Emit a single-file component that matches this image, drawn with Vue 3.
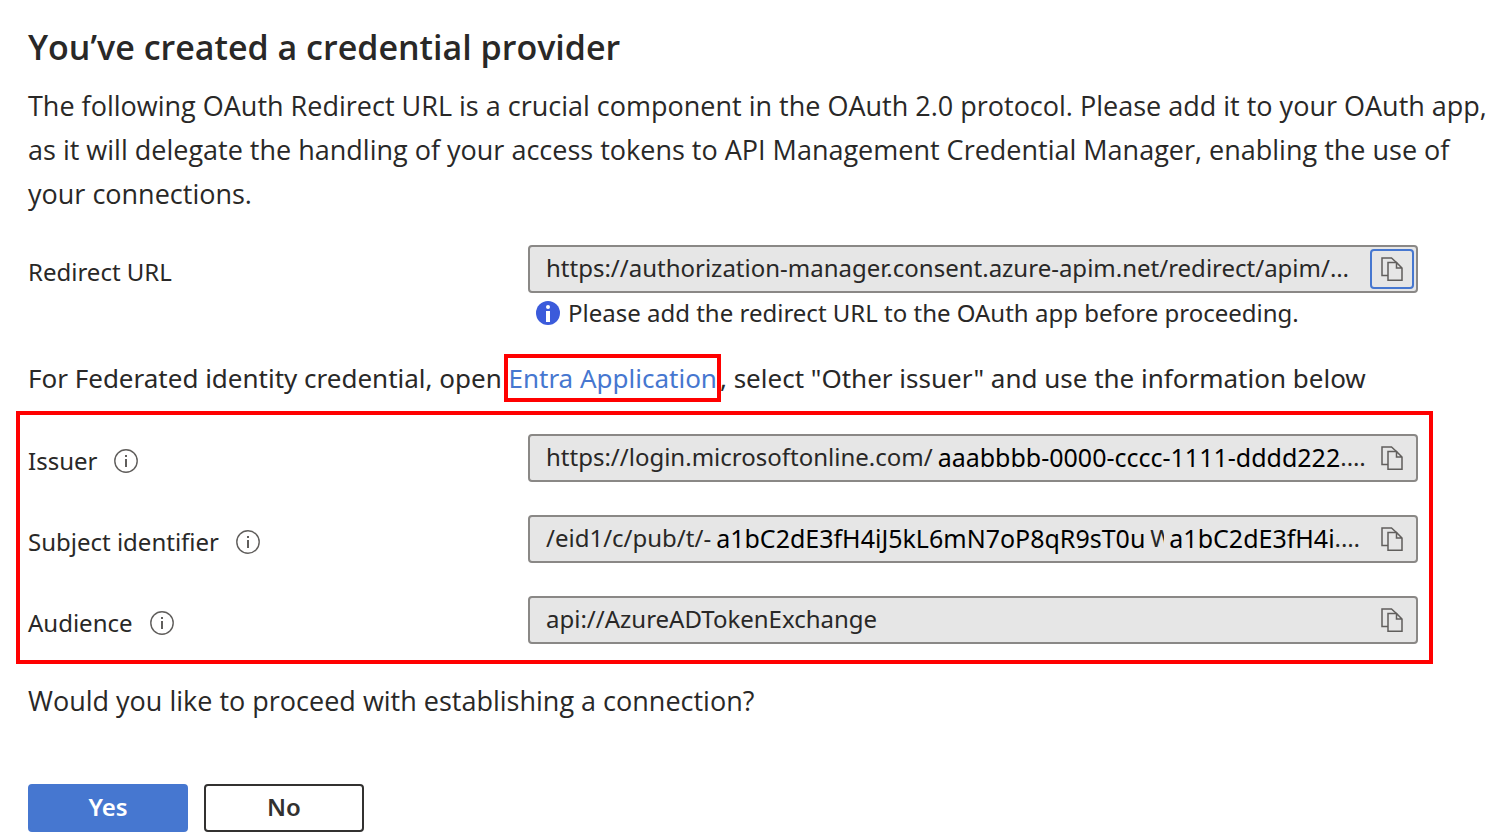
<script setup>
const redirectUrl = 'https://authorization-manager.consent.azure-apim.net/redirect/apim/…'

const fields = [
  {
    id: 'issuer',
    label: 'Issuer',
    parts: [
      { text: 'https://login.microsoftonline.com/', kind: 'plain' },
      { text: 'aaabbbb-0000-cccc-1111-dddd222', kind: 'mask' },
      { text: '.…', kind: 'plain' },
    ],
  },
  {
    id: 'subject',
    label: 'Subject identifier',
    parts: [
      { text: '/eid1/c/pub/t/-', kind: 'plain' },
      { text: 'a1bC2dE3fH4iJ5kL6mN7oP8qR9sT0u', kind: 'mask' },
      { text: 'W', kind: 'sliver' },
      { text: 'a1bC2dE3fH4i', kind: 'mask' },
      { text: '.…', kind: 'plain' },
    ],
  },
  { id: 'audience', label: 'Audience', value: 'api://AzureADTokenExchange' },
]
</script>

<template>
  <main class="page">
    <h1>You’ve created a credential provider</h1>
    <p class="prose intro">
      The following OAuth Redirect URL is a crucial component in the OAuth 2.0 protocol. Please add it to your OAuth app,
      as it will delegate the handling of your access tokens to API Management Credential Manager, enabling the use of
      your connections.
    </p>

    <div class="row redirect">
      <label class="name" for="redirect">Redirect URL</label>
      <div>
        <div class="field">
          <input id="redirect" class="value" type="text" readonly :value="redirectUrl" />
          <button class="copy active" type="button" aria-label="Copy Redirect URL">
            <svg viewBox="0 0 22 24" width="22" height="24">
              <path d="M7 18.5H1V1H10.5L16 6" />
              <path d="M7 5.5H15.5L21 11V23.2H7ZM15.5 5.5V11H21" />
            </svg>
          </button>
        </div>
        <p class="hint">
          <svg viewBox="0 0 24 24" width="24" height="24" aria-hidden="true">
            <circle cx="12" cy="12" r="12" fill="#3b5bdb" />
            <circle cx="12" cy="6" r="2" fill="#fff" />
            <rect x="10" y="10" width="4" height="11" fill="#fff" />
          </svg>
          Please add the redirect URL to the OAuth app before proceeding.
        </p>
      </div>
    </div>

    <p class="federated">
      For Federated identity credential, open
      <a href="#">Entra Application</a>, select "Other issuer" and use the information below
    </p>

    <section class="group">
      <div v-for="f in fields" :key="f.id" class="row">
        <div class="name">
          <label :for="f.id">{{ f.label }}</label>
          <svg viewBox="0 0 24 24" width="24" height="24" aria-hidden="true">
            <circle cx="12" cy="12" r="11.2" fill="none" stroke="#605e5c" stroke-width="1.4" />
            <rect x="11" y="6" width="2" height="2" fill="#605e5c" />
            <rect x="11" y="10" width="2" height="8" fill="#605e5c" />
          </svg>
        </div>
        <div class="field">
          <input v-if="f.value" :id="f.id" class="value" type="text" readonly :value="f.value" />
          <output v-else :id="f.id" class="value parts">
            <span v-for="(p, i) in f.parts" :key="i" :class="p.kind">{{ p.text }}</span>
          </output>
          <button class="copy" type="button" :aria-label="'Copy ' + f.label">
            <svg viewBox="0 0 22 24" width="22" height="24">
              <path d="M7 18.5H1V1H10.5L16 6" />
              <path d="M7 5.5H15.5L21 11V23.2H7ZM15.5 5.5V11H21" />
            </svg>
          </button>
        </div>
      </div>
    </section>

    <p class="prose question">Would you like to proceed with establishing a connection?</p>

    <div class="actions">
      <button class="primary" type="button">Yes</button>
      <button class="secondary" type="button">No</button>
    </div>
  </main>
</template>

<style>
body {
  background: #fff;
}
</style>

<style scoped>
.page {
  box-sizing: border-box;
  padding: 25px 20px 8px 28px;
  font-family: "Noto Sans", "Open Sans", sans-serif;
  font-size: 26px;
  line-height: 44px;
  color: #292827;
}
h1,
p {
  margin: 0;
}
h1,
.prose {
  font-family: "Open Sans", "Noto Sans", sans-serif;
}
h1 {
  font-size: 34px;
  font-weight: 600;
  line-height: 44px;
}
.prose {
  font-size: 27px;
}
.intro {
  margin-top: 15px;
}
.row {
  display: grid;
  grid-template-columns: 500px minmax(0, 1fr);
}
.redirect {
  margin: 29px 74px 0 0;
}
.name {
  display: flex;
  align-items: center;
  gap: 17px;
  height: 54px;
  font-size: 24px;
}
.field {
  box-sizing: border-box;
  display: flex;
  align-items: center;
  height: 48px;
  padding: 0 2px 0 16px;
  border: 2px solid #8a8886;
  border-radius: 4px;
  background: #e6e6e6;
}
.value {
  box-sizing: border-box;
  flex: 1;
  min-width: 0;
  height: 44px;
  padding: 0 0 4px;
  border: 0;
  outline: 0;
  background: transparent;
  font: inherit;
  font-size: 24px;
  line-height: 42px;
  color: #292827;
}
.parts {
  display: flex;
  white-space: nowrap;
}
.mask {
  margin-left: 5px;
  font-size: 25px;
  color: #000;
}
.sliver {
  width: 14px;
  margin-left: 5px;
  overflow: hidden;
}
.copy {
  box-sizing: border-box;
  display: flex;
  align-items: center;
  justify-content: center;
  width: 44px;
  height: 40px;
  padding: 0;
  border: 2px solid transparent;
  border-radius: 4px;
  background: transparent;
}
.copy.active {
  border-color: #4677d0;
}
.copy svg {
  fill: none;
  stroke: #605e5c;
  stroke-width: 1.5;
}
.hint {
  display: flex;
  align-items: center;
  gap: 8px;
  padding-left: 8px;
  font-size: 24px;
  line-height: 40px;
}
.federated {
  margin-top: 21px;
  line-height: 48px;
}
.federated a {
  margin-right: 3px;
  padding: 2px 0;
  outline: 4px solid #f00;
  color: #4677d0;
  text-decoration: none;
}
.group {
  display: grid;
  gap: 27px;
  margin: 9px 59px 0 -12px;
  padding: 19px 11px 10px 8px;
  border: 4px solid #f00;
}
.question {
  margin-top: 15px;
}
.actions {
  display: flex;
  gap: 16px;
  margin-top: 61px;
}
.actions button {
  width: 160px;
  height: 48px;
  padding: 0 0 2px;
  border: 2px solid #323130;
  border-radius: 4px;
  background: #fff;
  font: inherit;
  font-size: 24px;
  font-weight: 600;
  line-height: 42px;
  color: #323130;
}
.actions .primary {
  border-color: #4677d0;
  background: #4677d0;
  color: #fff;
}
</style>
